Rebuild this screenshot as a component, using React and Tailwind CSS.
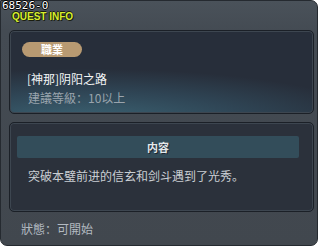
import React from "react";

const Card = ({ className, children }) => (
  <div
    className={`rounded-[5px] border border-[#1b2027] shadow-[inset_0_0_0_1px_#3d4650] ${className}`}
  >
    {children}
  </div>
);

const App = () => {
  return (
    <div className="w-[322px] h-[248px] bg-white font-['Noto_Sans_CJK_SC','Noto_Sans',sans-serif]">
      <div className="relative w-[318px] h-[246px] rounded-tr-[7px] rounded-b-[7px] border border-[#252a30] bg-[linear-gradient(180deg,#4a525a_0%,#444b53_12%,#41474e_100%)] pl-[8px] pr-[4px] pt-[10px]">
        <div className="absolute left-[1px] top-0 text-[11px] leading-[10px] text-white font-['DejaVu_Sans_Mono',monospace] [text-shadow:1px_0_0_#000,-1px_0_0_#000,0_1px_0_#000,0_-1px_0_#000]">
          68526-0
        </div>
        <div className="pl-[3px] text-[10px] leading-[11px] font-bold text-[#d8ef2c] font-['Liberation_Sans',sans-serif] [text-shadow:1px_1px_0_#1a1d10,-1px_0_0_#1a1d10,0_-1px_0_#1a1d10]">
          QUEST INFO
        </div>

        <Card className="mt-[8px] w-[305px] h-[84px] bg-[radial-gradient(ellipse_120%_80%_at_25%_110%,#3c6474_0%,#2f4555_45%,#272e3a_80%)] pl-[12px] pt-[11px]">
          <div className="w-[60px] h-[15px] rounded-full bg-[#b89a72] flex items-center justify-center text-[11px] font-bold text-white leading-none">
            職業
          </div>
          <div className="mt-[15px] pl-[5px] text-[12px] leading-[14px] text-[#f2f4f5]">
            [神那]阴阳之路
          </div>
          <div className="mt-[5px] pl-[6px] text-[12px] leading-[14px] text-[#9aa4ad]">
            建議等級：10以上
          </div>
        </Card>

        <Card className="mt-[8px] w-[305px] h-[90px] bg-[#2b313b] pl-[7px] pr-[14px] pt-[13px]">
          <div className="h-[22px] rounded-[2px] bg-[#334d5a] flex items-center justify-center text-[11px] font-bold text-[#e3e8eb] [text-shadow:1px_1px_0_#1b2530]">
            内容
          </div>
          <div className="mt-[11px] pl-[11px] text-[12px] leading-[14px] text-[#c9ced3] whitespace-nowrap">
            突破本璧前进的信玄和剑斗遇到了光秀。
          </div>
        </Card>

        <div className="mt-[10px] pl-[12px] text-[12px] leading-[14px] text-[#b3bac1]">
          狀態：可開始
        </div>
      </div>
    </div>
  );
};

export default App;
